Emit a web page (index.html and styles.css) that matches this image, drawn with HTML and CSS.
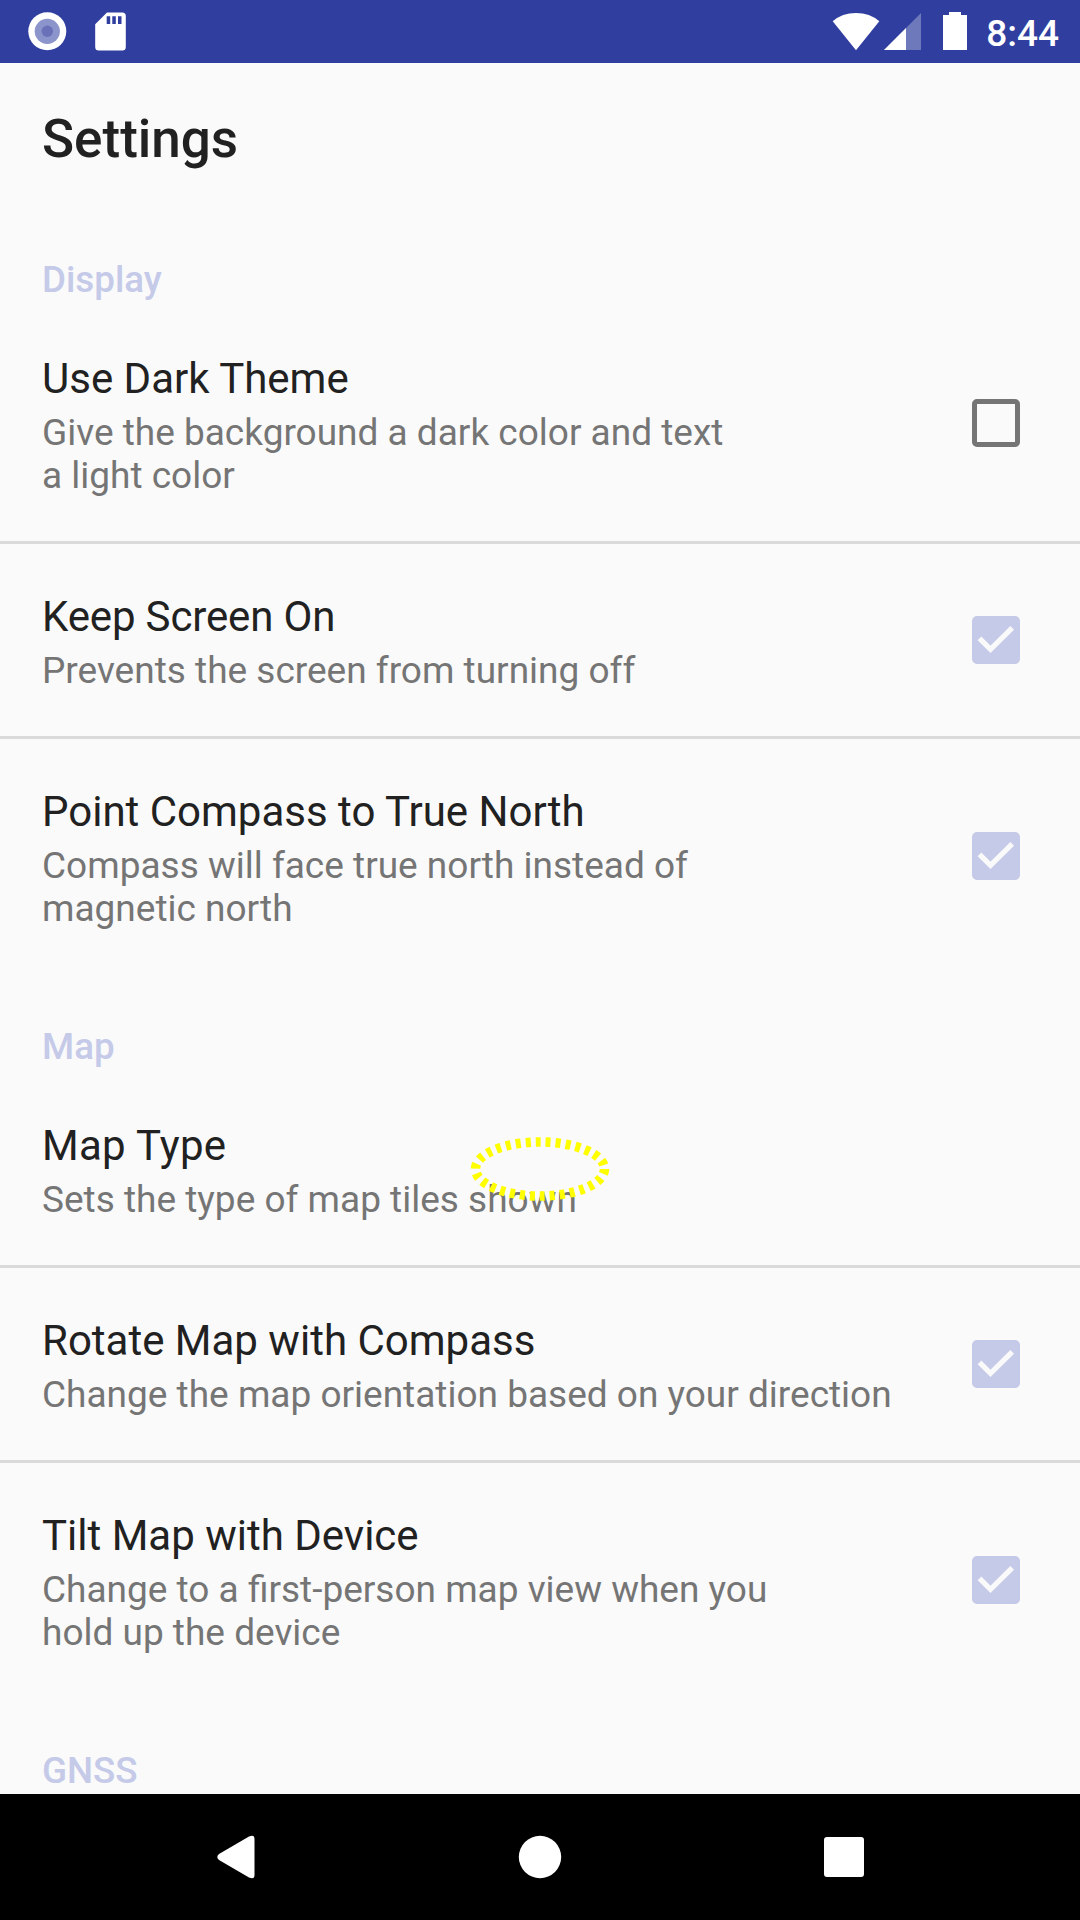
FILE: index.html
```html
<!DOCTYPE html>
<html lang="en">
<head>
<meta charset="utf-8">
<title>Settings</title>
<link rel="stylesheet" href="styles.css">
</head>
<body>
<div class="screen">
  <header class="status-bar">
    <svg class="status-left" width="140" height="63" viewBox="0 0 140 63">
      <circle cx="47.3" cy="31.3" r="19" fill="#fff"/>
      <circle cx="47.3" cy="31.3" r="12.6" fill="#8c94cc"/>
      <circle cx="47.3" cy="31.3" r="5.7" fill="#6a71b9"/>
      <path fill="#fff" fill-rule="evenodd" d="M107 12.5h15.300a3.500 3.500 0 0 1 3.500 3.500v31a3.500 3.500 0 0 1-3.500 3.500H98.700a3.500 3.500 0 0 1-3.500-3.500V24.300ZM106.700 16.200v7.800h3.500v-7.800ZM112.300 16.200v7.800h3.500v-7.800ZM118 16.200v7.800h3.500v-7.800Z"/>
    </svg>
    <svg class="status-right" width="150" height="63" viewBox="0 0 150 63">
      <path fill="#fff" d="M12.700 21.300Q22 13 36 13T59.300 21.300L36 50.300Z"/>
      <path fill="#fff" fill-opacity=".3" d="M101 13v37H64Z"/>
      <path fill="#fff" d="M86 28v22H64Z"/>
      <path fill="#fff" d="M123 15h6v-3h12v3h6v35h-24Z"/>
    </svg>
    <span class="clock">8:44</span>
  </header>
  <main class="content">
    <h1 class="page-title">Settings</h1>

    <h2 class="category">Display</h2>
    <div class="row tall divided">
      <div class="text"><div class="title">Use Dark Theme</div><div class="summary">Give the background a dark color and text<br>a light color</div></div>
      <span class="checkbox"></span>
    </div>
    <div class="row divided">
      <div class="text"><div class="title snug">Keep Screen On</div><div class="summary">Prevents the screen from turning off</div></div>
      <span class="checkbox checked"><svg class="tick" viewBox="0 0 48 48"><path d="M7.500 22.300 18.500 33.300 40.200 11.800"/></svg></span>
    </div>
    <div class="row tall">
      <div class="text"><div class="title">Point Compass to True North</div><div class="summary">Compass will face true north instead of<br>magnetic north</div></div>
      <span class="checkbox checked"><svg class="tick" viewBox="0 0 48 48"><path d="M7.500 22.300 18.500 33.300 40.200 11.800"/></svg></span>
    </div>

    <h2 class="category">Map</h2>
    <div class="row divided">
      <div class="text"><div class="title loose">Map Type</div><div class="summary">Sets the type of map tiles shown</div></div>
    </div>
    <div class="row divided">
      <div class="text"><div class="title">Rotate Map with Compass</div><div class="summary">Change the map orientation based on your direction</div></div>
      <span class="checkbox checked"><svg class="tick" viewBox="0 0 48 48"><path d="M7.500 22.300 18.500 33.300 40.200 11.800"/></svg></span>
    </div>
    <div class="row tall">
      <div class="text"><div class="title">Tilt Map with Device</div><div class="summary">Change to a first-person map view when you<br>hold up the device</div></div>
      <span class="checkbox checked"><svg class="tick" viewBox="0 0 48 48"><path d="M7.500 22.300 18.500 33.300 40.200 11.800"/></svg></span>
    </div>

    <h2 class="category">GNSS</h2>
  </main>
  <nav class="nav-bar">
    <svg width="1080" height="126" viewBox="0 0 1080 126">
      <path fill="#fff" d="M219 60 249 42.500Q254.500 40 254.500 45V81Q254.500 86 249 83.500L219 66Q215.500 63 219 60Z"/>
      <circle cx="540" cy="63" r="21.200" fill="#fff"/>
      <rect x="824" y="43" width="40" height="40" rx="3" fill="#fff"/>
    </svg>
  </nav>
  <svg class="highlight" width="144" height="70" viewBox="0 0 144 70">
    <ellipse cx="72" cy="35" rx="64.500" ry="27" fill="none" stroke="#ff0" stroke-width="9.500" stroke-dasharray="5 5"/>
  </svg>
</div>
</body>
</html>
```
FILE: styles.css
```css
* { box-sizing: border-box; }

body {
  margin: 0;
  background: #fafafa;
  font-family: Roboto, "Liberation Sans", sans-serif;
}

.screen {
  position: relative;
  display: flex;
  flex-direction: column;
  width: 1080px;
  height: 1920px;
  overflow: hidden;
}

.status-bar {
  display: flex;
  flex: none;
  align-items: center;
  height: 63px;
  padding-right: 21px;
  background: #303f9f;
  color: #fff;
}

.status-right { margin: 0 16px 0 auto; }

.clock {
  font-size: 37px;
  font-weight: 500;
  line-height: 63px;
  padding-top: 3px;
}

.content {
  flex: 1;
  min-height: 0;
  overflow: hidden;
}

.page-title {
  margin: 0;
  padding: 45px 42px 0;
  height: 180px;
  color: #212121;
  font-size: 53px;
  font-weight: 500;
  line-height: 62px;
}

.category {
  margin: 0;
  padding: 15px 42px 0;
  height: 63px;
  color: #c5cae9;
  font-size: 36.750px;
  font-weight: 500;
  line-height: 43px;
}

.row + .category {
  height: 99px;
  padding-top: 51px;
}

.row {
  display: flex;
  align-items: center;
  justify-content: space-between;
  padding: 0 60px 0 42px;
}

.divided { border-bottom: 3px solid #dadada; }

.text { padding: 48px 0 44px; }

.title {
  margin-bottom: 8px;
  color: #212121;
  font-size: 42px;
  line-height: 49px;
}

.snug { letter-spacing: -0.15px; }

.loose { letter-spacing: 0.3px; }

.summary {
  color: #757575;
  font-size: 37px;
  line-height: 43px;
  white-space: nowrap;
}

.checkbox {
  flex: none;
  width: 48px;
  height: 48px;
  border: 5px solid #757575;
  border-radius: 5px;
}

/* keeps the box on whole pixels in rows with an odd height */
.tall .checkbox { margin-bottom: 1px; }

.checked {
  border: 0;
  background: #c5cae9;
}

.tick {
  display: block;
  fill: none;
  stroke: #fafafa;
  stroke-width: 5.300;
}

.nav-bar {
  flex: none;
  height: 126px;
  background: #000;
}

.highlight {
  position: absolute;
  left: 468px;
  top: 1134px;
}
```
